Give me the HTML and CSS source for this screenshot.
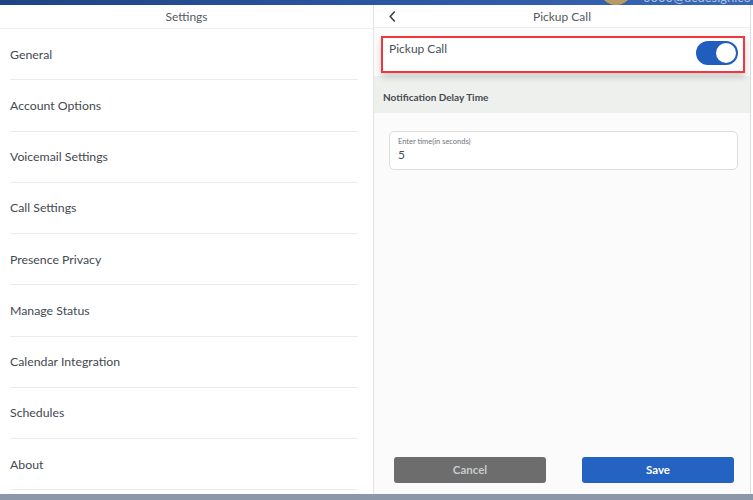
FILE: index.html
```html
<!DOCTYPE html>
<html>
  <head>
    <meta charset="utf-8" />
    <title>Pickup Call</title>
    <link rel="stylesheet" href="styles.css">
  </head>
  <body>
    <div class="topbar">
      <span class="avatar"></span>
      <span class="account">0000@ucdesign.co</span>
    </div>
    <div class="main">
      <div class="settings">
        <div class="settings-header">Settings</div>
        <ul class="settings-list">
          <li class="settings-item">General</li>
          <li class="settings-item">Account Options</li>
          <li class="settings-item">Voicemail Settings</li>
          <li class="settings-item">Call Settings</li>
          <li class="settings-item">Presence Privacy</li>
          <li class="settings-item">Manage Status</li>
          <li class="settings-item">Calendar Integration</li>
          <li class="settings-item">Schedules</li>
          <li class="settings-item">About</li>
        </ul>
      </div>
      <div class="detail">
        <div class="detail-header">
          <svg class="back-icon" viewBox="0 0 10 14">
            <path d="M7.5 1.5 L2.5 7 L7.5 12.5" />
          </svg>
          Pickup Call
        </div>
        <div class="pickup-row">
          <span class="pickup-label">Pickup Call</span>
          <span class="toggle"><span class="toggle-knob"></span></span>
        </div>
        <div class="section-title">Notification Delay Time</div>
        <div class="field">
          <div class="field-label">Enter time(in seconds)</div>
          <div class="field-value">5</div>
        </div>
        <div class="actions">
          <button class="button button-cancel">Cancel</button>
          <button class="button button-save">Save</button>
        </div>
      </div>
    </div>
    <div class="bottombar"></div>
  </body>
</html>
```
FILE: styles.css
```css
* {
  margin: 0;
  padding: 0;
  box-sizing: border-box;
}
body {
  width: 753px;
  height: 500px;
  overflow: hidden;
  font-family: Lato, "Open Sans", sans-serif;
  color: #434950;
  background: #ffffff;
  display: flex;
  flex-direction: column;
}
.topbar {
  height: 5px;
  flex: none;
  overflow: hidden;
  display: flex;
  justify-content: flex-end;
  align-items: flex-start;
  background: linear-gradient(90deg, #1f4384, #2c5aa6 60%, #3a68b4);
}
.avatar {
  width: 34px;
  height: 34px;
  margin-top: -29px;
  margin-right: 10px;
  border-radius: 50%;
  background: #b89a62;
}
.account {
  font-size: 13px;
  line-height: 13px;
  margin-top: -9px;
  color: #a9c1e6;
  white-space: nowrap;
  width: 110px;
  overflow: hidden;
}
.main {
  flex: 1;
  display: flex;
  min-height: 0;
}
.bottombar {
  height: 6px;
  flex: none;
  background: #8c98a9;
}

/* left column */
.settings {
  width: 374px;
  border-right: 1px solid #e3e3e3;
  background: #ffffff;
}
.settings-header {
  height: 24px;
  border-bottom: 1px solid #efefef;
  display: flex;
  align-items: center;
  justify-content: center;
  font-size: 12px;
  color: #555a60;
}
.settings-list {
  list-style: none;
}
.settings-item {
  height: 51.25px;
  margin: 0 15px 0 10px;
  border-bottom: 1px solid #ebebeb;
  display: flex;
  align-items: center;
  font-size: 12.3px;
}

/* right column */
.detail {
  flex: 1;
  display: flex;
  flex-direction: column;
  background: #fbfbfb;
  border-right: 1px solid #dcdcdc;
  margin-right: 2px;
}
.detail-header {
  height: 23px;
  flex: none;
  position: relative;
  border-bottom: 1px solid #ececec;
  background: #ffffff;
  display: flex;
  align-items: center;
  justify-content: center;
  font-size: 12px;
  color: #555a60;
}
.back-icon {
  position: absolute;
  left: 14px;
  top: 5px;
  width: 9px;
  height: 13px;
  fill: none;
  stroke: #3d4248;
  stroke-width: 1.8;
}
.pickup-row {
  height: 37px;
  margin: 8px 5px 0 7px;
  border: 2px solid #f0373d;
  background: #ffffff;
  box-shadow: 0 4px 6px rgba(0, 0, 0, 0.18);
  display: flex;
  justify-content: space-between;
  align-items: flex-start;
  padding: 3px 5px 0 6px;
  position: relative;
  z-index: 1;
}
.pickup-label {
  font-size: 12px;
  color: #4a4f55;
}
.toggle {
  width: 42px;
  height: 24px;
  border-radius: 12px;
  background: #1f5ebd;
  display: flex;
  align-items: center;
  justify-content: flex-end;
  padding-right: 2px;
}
.toggle-knob {
  width: 20px;
  height: 20px;
  border-radius: 50%;
  background: #ffffff;
}
.section-title {
  height: 37px;
  margin-top: 3px;
  padding: 5px 0 0 9px;
  background: #eef0ee;
  font-size: 10px;
  font-weight: bold;
  color: #454a50;
  display: flex;
  align-items: center;
}
.field {
  margin: 18px 12px 0 15px;
  height: 39px;
  border: 1px solid #dedede;
  border-radius: 5px;
  background: #ffffff;
  padding: 5px 8px 0;
}
.field-label {
  font-size: 7.5px;
  color: #6f747a;
}
.field-value {
  font-size: 12px;
  color: #4a4f55;
  margin-top: 1px;
}
.actions {
  margin-top: auto;
  padding: 0 16px 11px 20px;
  display: flex;
  justify-content: space-between;
}
.button {
  width: 152px;
  height: 26px;
  padding-bottom: 2px;
  border: none;
  border-radius: 3px;
  font-family: Lato, "Open Sans", sans-serif;
  font-size: 11.5px;
  font-weight: bold;
}
.button-cancel {
  background: #6c6d6c;
  color: #c9cbcc;
}
.button-save {
  background: #2463c2;
  color: #ffffff;
}
```
